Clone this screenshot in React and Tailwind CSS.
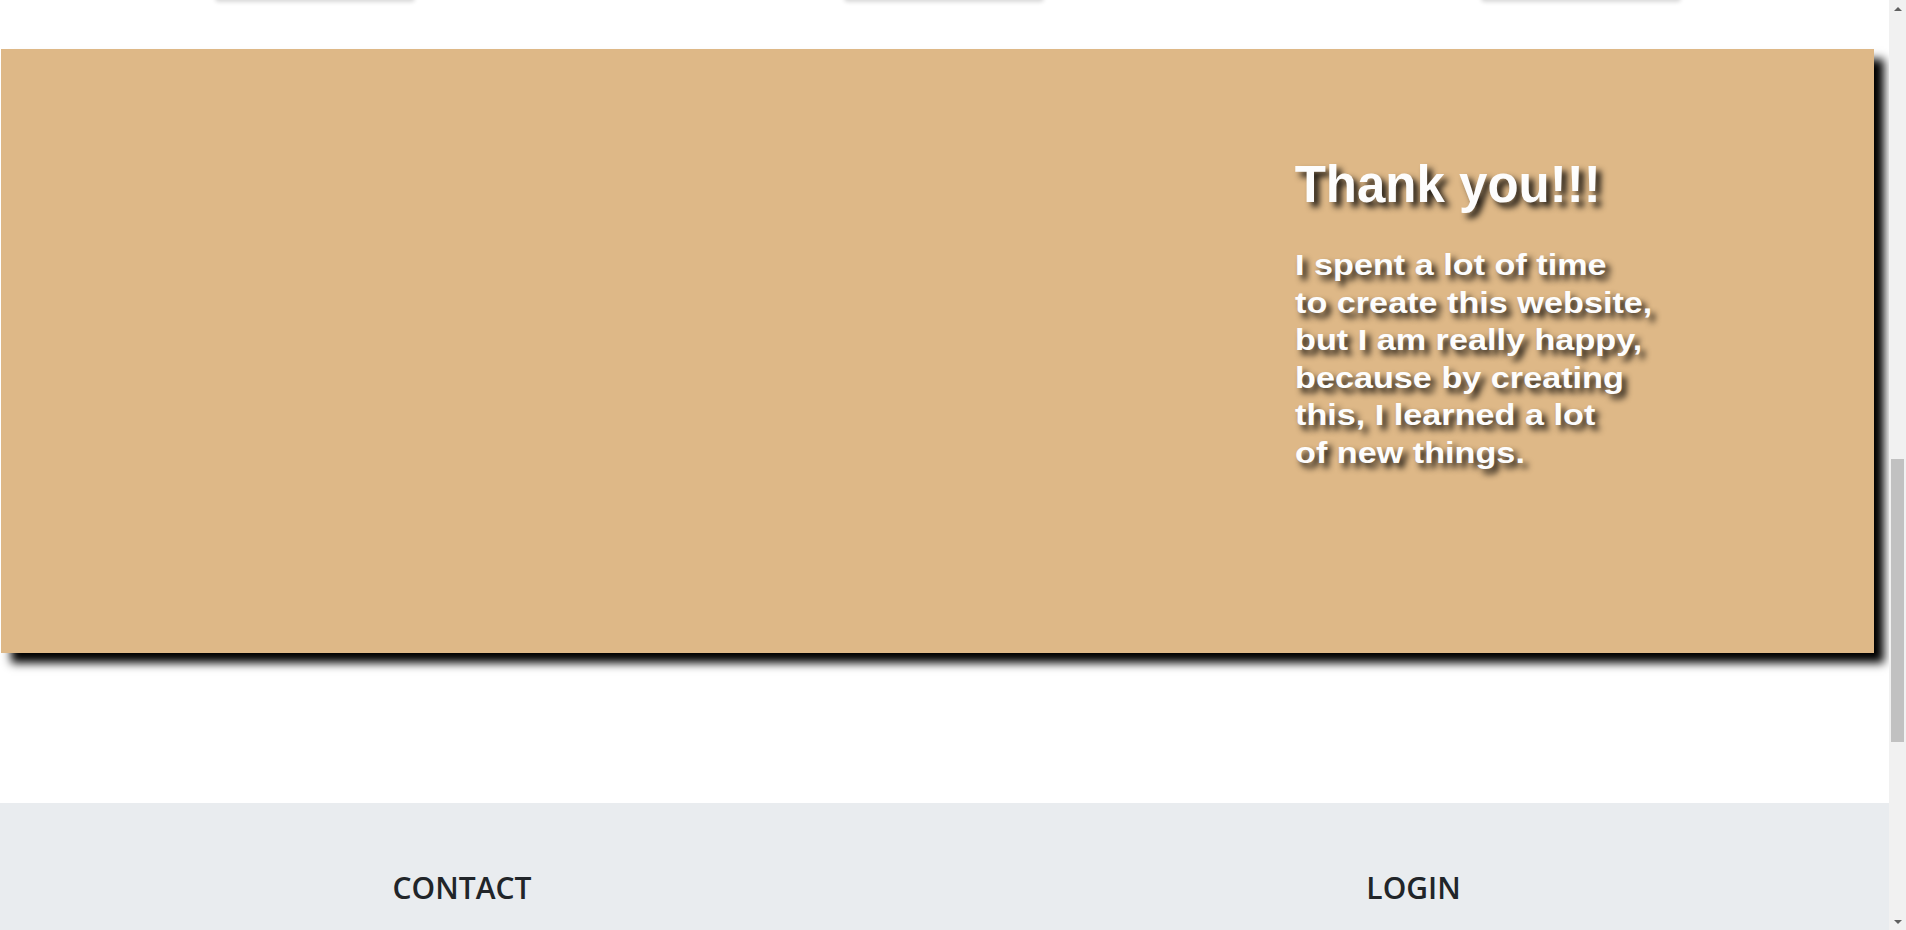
import React from "react";

function TopCards() {
  // only the bottoms of these cards peek in at the top of the viewport
  return (
    <div className="shrink-0 grid grid-cols-3 -mt-[40px] h-[40px]">
      <div className="flex justify-center">
        <div className="w-[200px] h-[40px] bg-white rounded-sm shadow-[0_2px_4px_rgba(0,0,0,0.16)]" />
      </div>
      <div className="flex justify-center">
        <div className="w-[200px] h-[40px] bg-white rounded-sm shadow-[0_2px_4px_rgba(0,0,0,0.16)]" />
      </div>
      <div className="flex justify-center pl-[14px]">
        <div className="w-[200px] h-[40px] bg-white rounded-sm shadow-[0_2px_4px_rgba(0,0,0,0.16)]" />
      </div>
    </div>
  );
}

function ThanksPanel() {
  return (
    <div className="shrink-0 ml-px mr-[15px] mt-[49px] h-[604px] bg-[#deb887] shadow-[10px_10px_9px_#000] grid grid-cols-3">
      <div className="col-span-2" />
      <div className="pl-[45px] pt-[109px] text-[#fdfdfd] font-['Liberation_Sans',Arial,sans-serif]">
        <h1 className="text-[51px] leading-[54px] font-bold [text-shadow:5px_5px_6px_rgba(0,0,0,0.9)]">
          Thank you!!!
        </h1>
        <p className="mt-[34px] text-[30px] leading-[37.6px] font-bold origin-left scale-x-[1.14] whitespace-nowrap [text-shadow:4px_5px_6px_rgba(0,0,0,0.9)]">
          I spent a lot of time
          <br />
          to create this website,
          <br />
          but I am really happy,
          <br />
          because by creating
          <br />
          this, I learned a lot
          <br />
          of new things.
        </p>
      </div>
    </div>
  );
}

function Footer() {
  return (
    <footer className="shrink-0 mt-[150px] h-[200px] bg-[#e9ecef] flex font-['Open_Sans',sans-serif] text-[#212529]">
      <div className="w-[938px] pr-[14px] pt-[67px] text-center">
        <h3 className="text-[30px] leading-[36px] font-semibold">CONTACT</h3>
      </div>
      <div className="flex-1 pt-[67px] text-center">
        <h3 className="text-[30px] leading-[36px] font-semibold">LOGIN</h3>
      </div>
    </footer>
  );
}

function Scrollbar() {
  return (
    <div className="shrink-0 w-[17px] h-full bg-[#f1f1f1] flex flex-col">
      <div className="h-[17px] flex items-center justify-center">
        <div className="w-0 h-0 border-x-4 border-x-transparent border-b-4 border-b-[#606060]" />
      </div>
      <div className="flex-1">
        <div className="mt-[442px] mx-[2px] h-[283px] bg-[#c1c1c1]" />
      </div>
      <div className="h-[17px] flex items-center justify-center">
        <div className="w-0 h-0 border-x-4 border-x-transparent border-t-4 border-t-[#606060]" />
      </div>
    </div>
  );
}

export default function App() {
  return (
    <div className="flex w-full h-[930px] overflow-hidden bg-white">
      <div className="flex-1 min-w-0 flex flex-col">
        <TopCards />
        <ThanksPanel />
        <Footer />
      </div>
      <Scrollbar />
    </div>
  );
}
